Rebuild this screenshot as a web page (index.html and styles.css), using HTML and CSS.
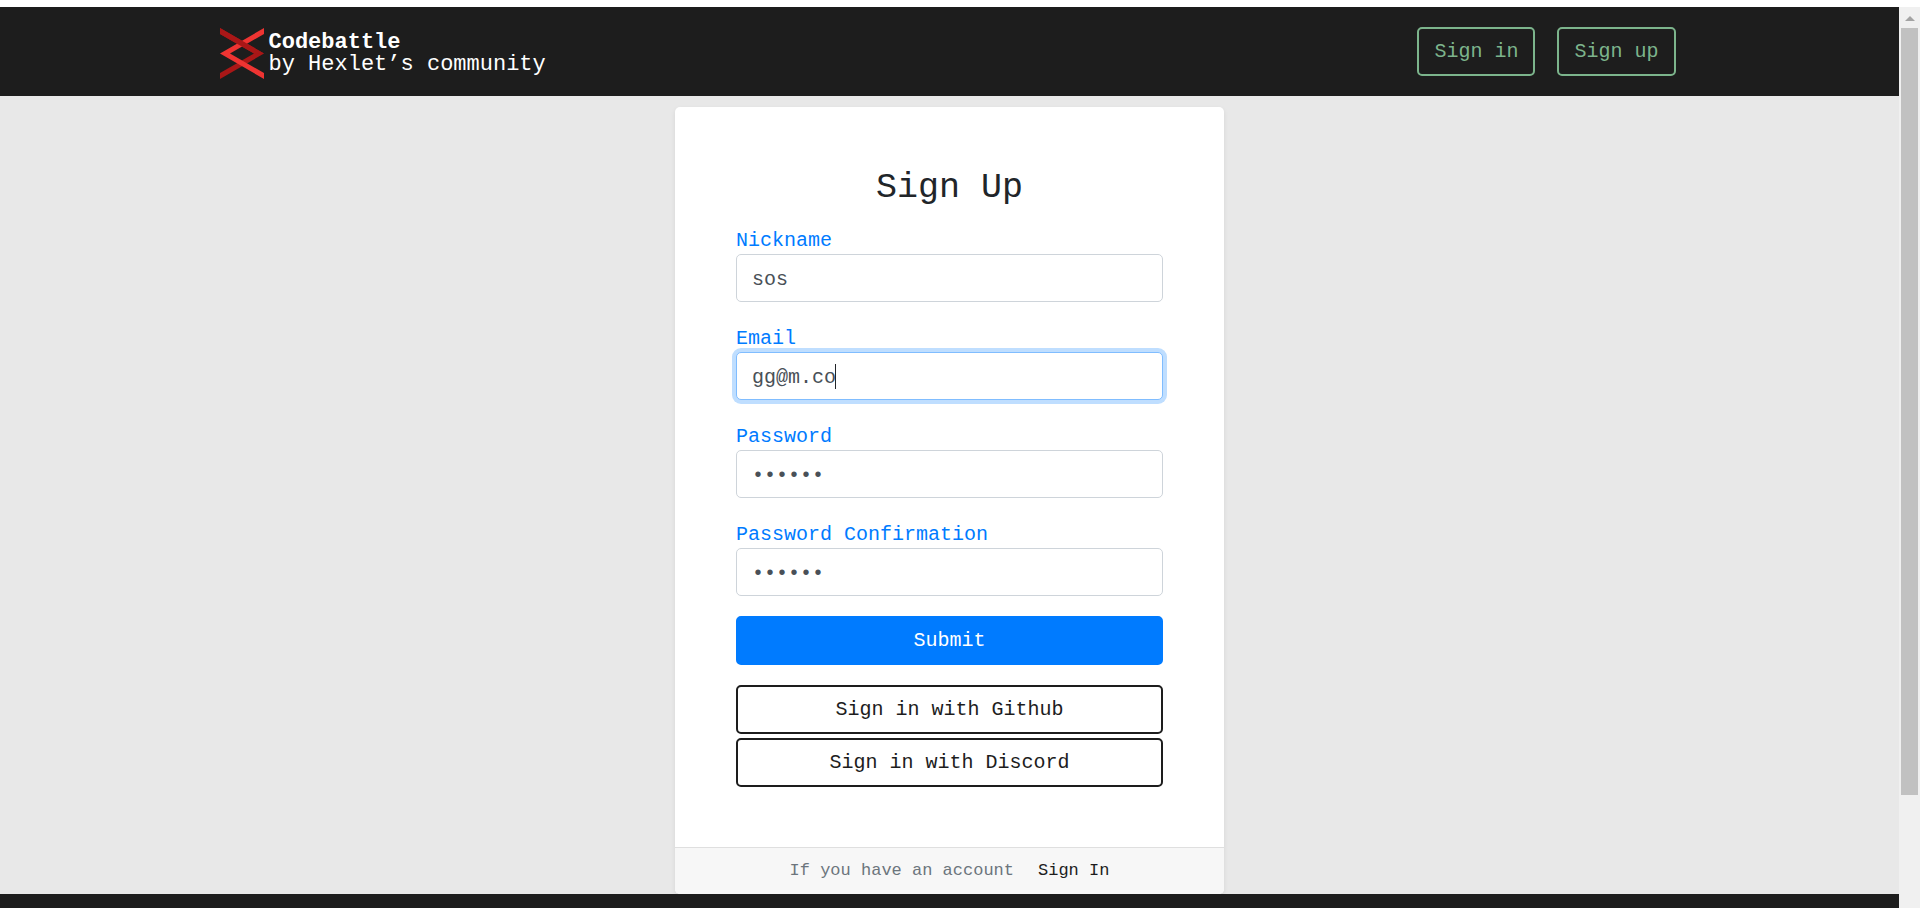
FILE: index.html
```html
<!DOCTYPE html>
<html lang="en">
<head>
<meta charset="utf-8">
<title>Codebattle - Sign Up</title>
<link rel="stylesheet" href="styles.css">
</head>
<body>
<div class="page">
  <header class="navbar">
    <div class="navbar-inner">
      <a class="brand" href="#">
        <svg class="brand-logo" viewBox="0 0 44 51" aria-hidden="true">
          <path fill="#a91717" d="M0 0l44 25.500L0 51v-6l34-19.500L0 6z"/>
          <path fill="#ee3432" d="M44 0v6L10 25.500 44 45v6L0 25.500z"/>
          <path fill="#a91717" d="M0 0l44 25.500H34L0 6z"/>
        </svg>
        <span class="brand-text"><strong>Codebattle</strong><span>by Hexlet’s community</span></span>
      </a>
      <nav class="nav-actions">
        <a class="btn btn-nav" href="#">Sign in</a>
        <a class="btn btn-nav" href="#">Sign up</a>
      </nav>
    </div>
  </header>
  <main class="main">
    <section class="card">
      <form class="card-body">
        <h1 class="title">Sign Up</h1>
        <div class="field">
          <label for="name">Nickname</label>
          <input class="control" id="name" type="text" value="sos">
        </div>
        <div class="field">
          <label for="email">Email</label>
          <div class="control-wrap">
            <input class="control control-active" id="email" type="email" value="gg@m.co">
            <span class="caret"></span>
          </div>
        </div>
        <div class="field">
          <label for="password">Password</label>
          <input class="control" id="password" type="password" value="secret">
        </div>
        <div class="field">
          <label for="confirm">Password Confirmation</label>
          <input class="control" id="confirm" type="password" value="secret">
        </div>
        <button class="btn btn-primary" type="button">Submit</button>
        <div class="social">
          <button class="btn btn-outline" type="button">Sign in with Github</button>
          <button class="btn btn-outline" type="button">Sign in with Discord</button>
        </div>
      </form>
      <div class="card-footer"><span>If you have an account</span><a href="#">Sign In</a></div>
    </section>
  </main>
  <footer class="footer"></footer>
</div>
<div class="scrollbar" aria-hidden="true">
  <svg class="scroll-arrow" viewBox="0 0 10 5"><path fill="#a3a3a3" d="M5 0l5 5H0z"/></svg>
  <div class="scroll-thumb"></div>
</div>
</body>
</html>
```
FILE: styles.css
```css
* { box-sizing: border-box; }

body {
  margin: 0;
  padding-top: 7px;
  height: 100vh;
  overflow: hidden;
  display: flex;
  background: #fff;
  color: #212529;
  font-family: "Liberation Mono", monospace;
  font-size: 20px;
  line-height: 30px;
}

.page {
  flex: 1;
  display: flex;
  flex-direction: column;
  background: #e8e8e8;
}

.navbar {
  padding: 20px 0 17px;
  background: #1d1d1d;
}

.navbar-inner {
  max-width: 1460px;
  margin: 0 auto;
  padding-right: 4px;
  display: flex;
  justify-content: space-between;
  align-items: flex-start;
}

.brand {
  display: flex;
  gap: 5px;
  color: #fff;
  text-decoration: none;
  font-size: 22px;
  line-height: 22px;
}

.brand-logo {
  width: 44px;
  height: 51px;
  margin-top: 1px;
}

.brand-text {
  display: flex;
  flex-direction: column;
  padding-top: 5px;
}

.nav-actions {
  display: flex;
  gap: 22px;
}

.btn {
  padding: 8px 15px;
  border: 2px solid;
  border-radius: 5px;
  background: transparent;
  font: inherit;
  line-height: 29px;
  text-align: center;
  text-decoration: none;
}

.btn-nav {
  color: #7cb48c;
}

.main {
  padding-top: 11px;
}

.card {
  max-width: 549px;
  margin: 0 auto;
  border-radius: 5px;
  background: #fff;
  box-shadow: 0 2px 5px rgba(0, 0, 0, 0.08);
  overflow: hidden;
}

.card-body {
  padding: 60px 61px;
  display: flex;
  flex-direction: column;
}

.title {
  margin: 0 0 15px;
  font-size: 35px;
  font-weight: 500;
  line-height: 42px;
  text-align: center;
}

.field {
  display: flex;
  flex-direction: column;
  margin-bottom: 20px;
}

.field label {
  padding-top: 4px;
  line-height: 26px;
  color: #007bff;
}

.control-wrap {
  position: relative;
  display: flex;
}

.control {
  width: 100%;
  height: 48px;
  padding: 2px 15px 0;
  border: 1px solid #ced4da;
  border-radius: 5px;
  outline: 0;
  background: #fff;
  color: #495057;
  font: inherit;
}

.control-active {
  border-color: #80bdff;
  box-shadow: 0 0 0 4px #bfdeff;
}

.caret {
  position: absolute;
  top: 12px;
  left: calc(15px + 7ch);
  width: 1px;
  height: 25px;
  background: #212529;
}

.btn-primary {
  border-color: #007bff;
  background: #007bff;
  color: #fff;
}

.social {
  display: flex;
  flex-direction: column;
  gap: 4px;
  margin-top: 20px;
}

.btn-outline {
  border-color: #1d1d1d;
  color: #1d1d1d;
}

.card-footer {
  display: flex;
  justify-content: center;
  gap: 24px;
  padding: 8px;
  border-top: 1px solid #dfdfdf;
  background: #f7f7f7;
  color: #6c757d;
  font-size: 17px;
}

.card-footer a {
  color: #1d1d1d;
  text-decoration: none;
}

.footer {
  flex: 1;
  background: #1d1d1d;
}

.scrollbar {
  width: 21px;
  padding: 9px 2px 0;
  display: flex;
  flex-direction: column;
  background: #f0f0f0;
}

.scroll-arrow {
  width: 10px;
  height: 5px;
  margin: 0 auto 7px;
}

.scroll-thumb {
  height: 86%;
  background: #c1c1c1;
}
```
